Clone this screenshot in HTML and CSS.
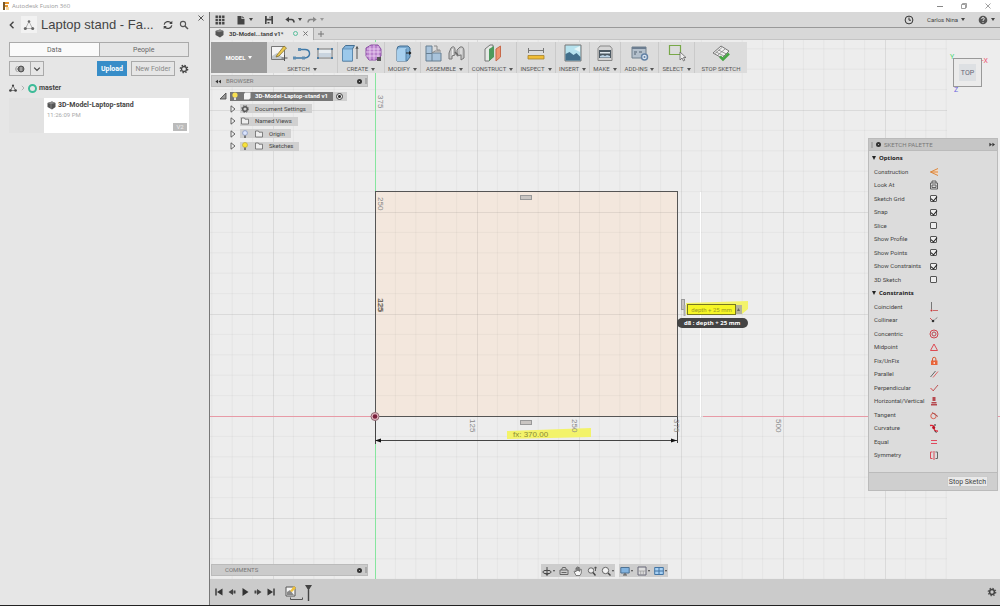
FILE: index.html
```html
<!DOCTYPE html>
<html lang="en">
<head>
<meta charset="utf-8">
<title>Autodesk Fusion 360</title>
<link rel="stylesheet" href="styles.css">
</head>
<body>
<header class="titlebar">
  <svg class="app-logo" viewBox="0 0 6 8"><path d="M0 0h6v2H2v1h3v2H2v3H0z" fill="#e8962e"/><path d="M0 0h2v8H0z" fill="#7a5a2a"/><path d="M3 5h3v3H3z" fill="#f6d8a0"/></svg>
  <span class="app-title">Autodesk Fusion 360</span>
  <div class="window-buttons">
    <button aria-label="Minimize"><svg viewBox="0 0 6 6"><path d="M0 3.5h6" stroke="#888" fill="none"/></svg></button>
    <button aria-label="Restore"><svg viewBox="0 0 6 6"><path d="M.5 1.5h4v4h-4zM1.5 1.5v-1h4v4h-1" stroke="#888" stroke-width=".8" fill="none"/></svg></button>
    <button aria-label="Close window"><svg viewBox="0 0 6 6"><path d="M.5.5l5 5m0-5l-5 5" stroke="#888" stroke-width=".8" fill="none"/></svg></button>
  </div>
</header>

<div class="workspace">
  <aside class="data-panel">
    <button class="panel-close" aria-label="Close panel"><svg viewBox="0 0 6 6"><path d="M.5.5l5 5m0-5l-5 5" stroke="#555" fill="none"/></svg></button>
    <div class="project-row">
      <button class="back" aria-label="Back"><svg viewBox="0 0 6 8"><path d="M4.500.8L1.300 4l3.200 3.200" stroke="#444" stroke-width="1.400" fill="none"/></svg></button>
      <span class="project-tile"><svg viewBox="0 0 12 12"><path d="M6 2.500L2.500 9.500h7z" stroke="#999" stroke-width=".7" fill="none"/><circle cx="6" cy="2.500" r="1.300" fill="#666"/><circle cx="2.300" cy="9.500" r="1.500" fill="#666"/><circle cx="9.700" cy="9.500" r="1.500" fill="#666"/></svg></span>
      <h1>Laptop stand - Fa...</h1>
      <button class="tool refresh" aria-label="Refresh"><svg viewBox="0 0 10 10"><path d="M1.200 4.600a3.900 3.500 0 0 1 7-1.600M8.800 5.400a3.900 3.500 0 0 1-7 1.600" stroke="#444" stroke-width="1.200" fill="none"/><path d="M9.300.8v3.200H6.200zM.7 9.200V6h3.100z" fill="#444"/></svg></button>
      <button class="tool" aria-label="Search"><svg viewBox="0 0 10 10"><circle cx="4" cy="4" r="2.600" stroke="#555" stroke-width="1.100" fill="none"/><path d="M6 6l3 3" stroke="#555" stroke-width="1.500"/></svg></button>
    </div>
    <div class="view-tabs">
      <button class="active">Data</button>
      <button>People</button>
    </div>
    <div class="actions">
      <div class="split">
        <button aria-label="Visibility"><svg viewBox="0 0 12 10"><path d="M3.500 2Q0 5 3.500 8M3 5h2" stroke="#888" stroke-width=".9" fill="none"/><circle cx="7" cy="5" r="3" fill="#777" stroke="#444" stroke-width=".8"/><path d="M6 3.800h2.200M6 5h2.200M6 6.200h2.200" stroke="#ddd" stroke-width=".6"/></svg></button>
        <button aria-label="More"><svg viewBox="0 0 8 8"><path d="M1.200 2.700L4 5.500l2.800-2.800" stroke="#444" stroke-width="1.200" fill="none"/></svg></button>
      </div>
      <button class="upload">Upload</button>
      <button class="new-folder">New Folder</button>
      <button class="tool gear" aria-label="Settings"><svg viewBox="0 0 10 10"><circle cx="5" cy="5" r="3.700" stroke="#444" stroke-width="1.300" stroke-dasharray="1.450 1.450" fill="none"/><circle cx="5" cy="5" r="2.500" stroke="#444" stroke-width="1.300" fill="none"/></svg></button>
    </div>
    <nav class="crumbs" aria-label="Folder">
      <svg class="i8" viewBox="0 0 8 8"><path d="M4 1.500L1.500 6.500h5z" stroke="#555" stroke-width=".7" fill="none"/><circle cx="4" cy="1.500" r="1.100" fill="#444"/><circle cx="1.400" cy="6.500" r="1.300" fill="#444"/><circle cx="6.600" cy="6.500" r="1.300" fill="#444"/></svg>
      <svg class="chev" viewBox="0 0 4 6"><path d="M.8.8L3 3 .8 5.200" stroke="#999" stroke-width=".7" fill="none"/></svg>
      <span class="ring"></span>
      <a href="#master">master</a>
    </nav>
    <article class="file-card">
      <div class="thumb"></div>
      <div class="file-info">
        <h2><svg class="i9" viewBox="0 0 9 9"><path d="M.5 2L5 .5 8.500 2v4L5 8.500.5 6z" fill="#555"/><path d="M.5 2L4 3.200 8.500 2 5 .5z" fill="#888"/><path d="M4 3.200V8" stroke="#aaa" stroke-width=".5"/></svg>3D-Model-Laptop-stand</h2>
        <time>11:26:09 PM</time>
        <span class="version">V2</span>
      </div>
    </article>
  </aside>

  <main class="editor">
    <div class="appbar">
      <button aria-label="Data panel"><svg viewBox="0 0 10 10"><path d="M.5.5h2.400v2.400H.5zM3.800.5h2.400v2.400H3.800zM7.100.5h2.400v2.400H7.100zM.5 3.800h2.400v2.400H.5zM3.800 3.800h2.400v2.400H3.800zM7.100 3.800h2.400v2.400H7.100zM.5 7.100h2.400v2.400H.5zM3.800 7.100h2.400v2.400H3.800zM7.100 7.100h2.400v2.400H7.100z" fill="#444"/></svg></button>
      <button class="drop" aria-label="File"><svg viewBox="0 0 10 10"><path d="M1.500 1h4v3h3v5.500h-7z" fill="#444"/><path d="M6.300 1l2.200 2.200H6.300z" fill="#444"/></svg></button>
      <button aria-label="Save"><svg viewBox="0 0 10 10"><path d="M1 1h8v8H1z" fill="#444"/><path d="M2.800 1h4.400v2.800H2.800zM2.600 5.500h4.800V9H2.600z" fill="#ddd"/><path d="M5.500 1.500h1v1.700h-1zM3.500 7h2v1.500h-2z" fill="#444"/></svg></button>
      <div class="history">
        <button class="drop" aria-label="Undo"><svg viewBox="0 0 10 10"><path d="M3 4.500h3.500Q9 4.700 9 7.500" stroke="#444" stroke-width="1.600" fill="none"/><path d="M.3 4.500L4 1.800v5.400z" fill="#444"/></svg></button>
        <button class="drop dim" aria-label="Redo"><svg viewBox="0 0 10 10"><path d="M7 4.500H3.500Q1 4.700 1 7.500" stroke="#888" stroke-width="1.400" fill="none"/><path d="M9.700 4.500L6 1.800v5.400z" fill="#888"/></svg></button>
      </div>
      <div class="account">
        <button aria-label="Job status"><svg viewBox="0 0 10 10"><circle cx="5" cy="5" r="3.900" stroke="#333" fill="none"/><path d="M5 2.500V5.200h2" stroke="#333" stroke-width="1" fill="none"/></svg></button>
        <button class="drop user">Carlos Nina</button>
        <button class="drop" aria-label="Help"><svg viewBox="0 0 10 10"><circle cx="5" cy="5" r="4.300" fill="#555"/><path d="M3.700 4q0-1.500 1.300-1.500T6.300 3.900Q6.300 4.800 5 5.200v.8M5 7v1" stroke="#eee" stroke-width=".9" fill="none"/></svg></button>
      </div>
    </div>
    <div class="doc-tabs">
      <div class="doc-tab">
        <svg class="i9" viewBox="0 0 9 9"><path d="M.5 2L5 .5 8.500 2v4L5 8.500.5 6z" fill="#555"/><path d="M.5 2L4 3.200 8.500 2 5 .5z" fill="#888"/></svg>
        <span>3D-Model...tand v1*</span>
        <i class="status"></i>
        <button aria-label="Close tab"><svg viewBox="0 0 6 6"><path d="M.5.5l5 5m0-5l-5 5" stroke="#777" stroke-width="1.200" fill="none"/></svg></button>
      </div>
      <button class="add-tab" aria-label="New tab"><svg viewBox="0 0 6 6"><path d="M3 0v6M0 3h6" stroke="#777" fill="none"/></svg></button>
    </div>

    <section class="canvas">
      <svg class="drawing" aria-label="Sketch">
        <defs>
          <pattern id="grid" x="375" y="416" width="102" height="102" patternUnits="userSpaceOnUse">
            <path d="M20.400 0v102M40.800 0v102M61.200 0v102M81.600 0v102M0 20.400h102M0 40.800h102M0 61.200h102M0 81.600h102" stroke="#000" stroke-opacity=".03"/>
            <path d="M.5 0v102M0 .5h102" stroke="#000" stroke-opacity=".08"/>
          </pattern>
        </defs>
        <g transform="translate(-210 -40)">
          <rect x="375" y="192" width="302" height="224" fill="#f3e7dd"/>
          <rect x="210" y="40" width="737" height="540" fill="url(#grid)"/>
          <path d="M375.500 40v540" stroke="#86e59e"/>
          <path d="M210 416.500h467M703 416.500h297" stroke="#e79aa6"/>
          <path d="M700.500 192v225" stroke="#fff"/>
          <rect x="375.500" y="191.500" width="302" height="225" fill="none" stroke="#555"/>
          <path d="M507 431l84-3v9l-84 2z" fill="#f3f36a"/>
          <path d="M375.500 417v27M677.500 417v26M376 440.500h301" stroke="#444"/>
          <path d="M375 440.500l6-2v4zM677 440.500l-6-2v4z" fill="#111"/>
          <g fill="#c9c5c2" stroke="#999"><rect x="520.500" y="195.500" width="11" height="4"/><rect x="520.500" y="420.500" width="11" height="4"/><rect x="681.500" y="299.500" width="3" height="10"/></g>
          <circle cx="375" cy="416.500" r="4" fill="#e5b9c2" stroke="#8d6972"/><circle cx="375" cy="416.500" r="2.300" fill="#79203b"/>
          <g class="scale-text">
            <text transform="translate(378 95) rotate(90)">375</text>
            <text transform="translate(378 197) rotate(90)">250</text>
            <text class="dark" transform="translate(378 299) rotate(90)">125</text>
            <text class="dark" transform="translate(378 298) rotate(90)">225</text>
            <text transform="translate(470 419) rotate(90)">125</text>
            <text transform="translate(572 419) rotate(90)">250</text>
            <text transform="translate(674 419) rotate(90)">375</text>
            <text transform="translate(776 419) rotate(90)">500</text>
          </g>
          <text class="dim-text" x="513" y="437">fx: 370.00</text>
          <path d="M686 303l62-2v8l-6 5h-56z" fill="#f3f36a"/>
          <path d="M684.500 305v11" stroke="#aaa" stroke-width="2"/>
          <rect x="735" y="305" width="7" height="9" fill="#b5b39b"/><path d="M737 311l1.500-3 1.500 3z" fill="#666"/>
        </g>
      </svg>
      <input class="dim-input" aria-label="Dimension" value="depth + 25 mm">
      <div class="dim-tip">d8 : depth + 25 mm</div>

      <div class="viewcube">
        <button>TOP</button>
        <span class="axis x">-X</span><span class="axis y">Y</span><span class="axis z">Z</span>
      </div>

      <div class="toolbar">
        <button class="mode drop">MODEL</button>
        <div class="group"><div class="icons">
          <svg viewBox="0 0 18 18"><path d="M1.500 2.500h13v13h-13z" fill="#f4f4f4" stroke="#777"/><path d="M2 12l5-3 8 6H2z" fill="#c2c8cc"/><path d="M7 11L14 2l2.500 2L9 12l-3 1z" fill="#ecc94f" stroke="#7a6524" stroke-width=".7"/><path d="M14.500 11v6M11.500 14h6" stroke="#555"/></svg>
          <svg viewBox="0 0 18 18"><path d="M1 14h11q5-1 4.500-5T11 5.500H7" stroke="#3d78a8" stroke-width="1.400" fill="none"/><path d="M0 12.500h3v3H0zM9 12.500h3v3H9zM5 4h3v3H5z" fill="#5f8db1"/></svg>
          <svg viewBox="0 0 18 18"><path d="M2 5h14v9H2z" fill="#e7ecf0" stroke="#777"/><path d="M3 9h12v4H3z" fill="#c9d4df"/><path d="M1 4h2v2H1zM15 4h2v2h-2zM1 13h2v2H1zM15 13h2v2h-2z" fill="#4f7da3"/></svg>
        </div><button class="drop">SKETCH</button></div>
        <div class="group"><div class="icons">
          <svg viewBox="0 0 18 18"><path d="M1.500 5l3-3.500h9L11.500 5v12h-10z" fill="#83b4dc" stroke="#456f92"/><path d="M1.500 5h10v12h-10z" fill="#9cc9eb" stroke="#5483a9" stroke-width=".7"/><path d="M16 3v12M15 5l1-2.500L17 5" stroke="#555" fill="none"/></svg>
          <svg viewBox="0 0 18 18"><path d="M2 4l5-3h7l3 4v7l-5 4H5l-3-4z" fill="#b983cc" stroke="#8c4fa5"/><path d="M2 8h15M2 12h14M6 2v14M10 1v15M14 2v12M3 5h13" stroke="#f0d8f6" stroke-width=".8"/><path d="M13 13h4v4h-4z" fill="#555"/></svg>
        </div><button class="drop">CREATE</button></div>
        <div class="group"><div class="icons">
          <svg viewBox="0 0 18 18"><path d="M3 5q0-3 3-3h8l2 2v9l-3 4H3z" fill="#78a9d0" stroke="#456f92"/><path d="M3 7q0-3 4-3h5v13H3z" fill="#a8d0ee"/><path d="M12 5v12" stroke="#5483a9"/><path d="M12 9h5" stroke="#222"/><path d="M15 7l2.500 2L15 11z" fill="#222"/></svg>
        </div><button class="drop">MODIFY</button></div>
        <div class="group"><div class="icons">
          <svg viewBox="0 0 18 18"><path d="M2 2h6v7h9v8H2z" fill="#a9c4dc" stroke="#667e91"/><path d="M2 9.500h6V17" stroke="#667e91" fill="none"/><path d="M10 2h3v4h3M8 9l3-2h6" stroke="#888" fill="none"/></svg>
          <svg viewBox="0 0 18 18"><path d="M2 15V9l2-5q3-3 4 1v6l-3 1v3zM10 12V6l3-3q4-1 4 4v7l-3 2v-5z" fill="#c4c4c4" stroke="#777"/><path d="M8 8l3 3" stroke="#666" stroke-width="1.500"/><path d="M5.500 5v6M14 4.500V10" stroke="#eee"/></svg>
        </div><button class="drop">ASSEMBLE</button></div>
        <div class="group"><div class="icons">
          <svg viewBox="0 0 18 18"><path d="M1 5l5-4h3v12l-4 4H1z" fill="#e6e9e6" stroke="#777"/><path d="M5 5l5-3v11l-5 4z" fill="#4d9a5d"/><path d="M12 5l4.500-3v11L12 17z" fill="#ee9370" stroke="#c7694a"/></svg>
        </div><button class="drop">CONSTRUCT</button></div>
        <div class="group"><div class="icons">
          <svg viewBox="0 0 18 18"><path d="M1.500 6.500h15M1.500 4v5M16.500 4v5" stroke="#777"/><path d="M1 11.500h16v3.500H1z" fill="#f1bd35" stroke="#a5802a" stroke-width=".8"/></svg>
        </div><button class="drop">INSPECT</button></div>
        <div class="group"><div class="icons">
          <svg viewBox="0 0 18 18"><path d="M1 1h16v16H1z" fill="#b6e2ee" stroke="#777"/><path d="M1.500 10l4-2 4 3 3-2 4 4v3.500h-15z" fill="#426f8b"/><path d="M10 5l6-3v6z" fill="#e5f5f8"/></svg>
        </div><button class="drop">INSERT</button></div>
        <div class="group"><div class="icons">
          <svg viewBox="0 0 18 18"><path d="M2 4.500L4 2h10l2 2.500v12H2z" fill="#d5d5d5" stroke="#888"/><path d="M3 6h12v8H3z" fill="#4c5963"/><path d="M4 8h10v1.500H4z" fill="#dfe8ee"/><path d="M4 12l3-1 2 1 2-1 3 1v1.500H4z" fill="#bdd5e8"/></svg>
        </div><button class="drop">MAKE</button></div>
        <div class="group"><div class="icons">
          <svg viewBox="0 0 18 18"><path d="M1 3h14v11H1z" fill="#b4c0cc" stroke="#71808e"/><path d="M1 3h14v2H1z" fill="#6c7d90"/><path d="M3 8h3M8 8h3M3 10h2" stroke="#506070"/><circle cx="13.500" cy="13" r="3" fill="#dce6f2" stroke="#6483a6" stroke-width="1.500"/><circle cx="13.500" cy="13" r="1" fill="#6483a6"/></svg>
        </div><button class="drop">ADD-INS</button></div>
        <div class="group"><div class="icons">
          <svg viewBox="0 0 18 18"><path d="M1.500 1.500h11v9h-11z" fill="none" stroke="#78a848" stroke-width="1.200"/><path d="M12 8v8l2-2 1.500 3 1.300-.8L15.500 13.500H18z" fill="#eee" stroke="#666" stroke-width=".8"/></svg>
        </div><button class="drop">SELECT</button></div>
        <div class="group"><div class="icons">
          <svg viewBox="0 0 18 18"><path d="M1 9l8-7 8 5-7 7z" fill="#f0f0f0" stroke="#777"/><path d="M4 8l8 4M6.500 6l8 4M6 11l7-6M3 9.500l7-6" stroke="#888" stroke-width=".8"/><path d="M8 12.500l3 3 6-6" stroke="#46a644" stroke-width="2.500" fill="none"/></svg>
        </div><button>STOP SKETCH</button></div>
      </div>

      <section class="browser">
        <header class="bar"><svg class="i6" viewBox="0 0 8 6"><path d="M4 .5v5L.5 3zM8 .5v5L4.500 3z" fill="#333"/></svg><span>BROWSER</span><i class="dot"></i><i class="grip"></i></header>
        <ul class="tree">
          <li><svg class="i8" viewBox="0 0 8 8"><path d="M7 1v6H1z" fill="#999" stroke="#444" stroke-width=".8"/></svg><div class="node root"><svg class="i8" viewBox="0 0 8 8"><circle cx="4" cy="3" r="2.600" fill="#f8e052"/><path d="M3 5.500h2V8H3z" fill="#ddd"/></svg><svg class="i8" viewBox="0 0 8 8"><path d="M1 2l1-1.500h5.500V6L6 7.500H1z" fill="#f5f5f5"/></svg><span>3D-Model-Laptop-stand v1</span></div><span class="activate"><i class="radio"></i></span></li>
          <li><svg class="i8 tri" viewBox="0 0 8 8"><path d="M2 .8L6 4 2 7.200z" fill="#eee" stroke="#444" stroke-width=".8"/></svg><div class="node"><svg class="i8" viewBox="0 0 8 8"><circle cx="4" cy="4" r="2.300" fill="none" stroke="#555" stroke-width="1.500"/><circle cx="4" cy="4" r="3.500" fill="none" stroke="#555" stroke-width=".8" stroke-dasharray="1.400"/></svg><span>Document Settings</span></div></li>
          <li><svg class="i8 tri" viewBox="0 0 8 8"><path d="M2 .8L6 4 2 7.200z" fill="#eee" stroke="#444" stroke-width=".8"/></svg><div class="node"><svg class="i8" viewBox="0 0 8 8"><path d="M.5 7V1h3l.5 1.200h3.500V7z" fill="#eee" stroke="#666" stroke-width=".8"/></svg><span>Named Views</span></div></li>
          <li><svg class="i8 tri" viewBox="0 0 8 8"><path d="M2 .8L6 4 2 7.200z" fill="#eee" stroke="#444" stroke-width=".8"/></svg><div class="node"><svg class="i8" viewBox="0 0 8 8"><circle cx="4" cy="3" r="2.400" fill="#dbe4fb" stroke="#7d8fc0" stroke-width=".7"/><path d="M3 5.500h2V8H3z" fill="#777"/></svg><svg class="i8" viewBox="0 0 8 8"><path d="M.5 7V1h3l.5 1.200h3.500V7z" fill="#eee" stroke="#666" stroke-width=".8"/></svg><span>Origin</span></div></li>
          <li><svg class="i8 tri" viewBox="0 0 8 8"><path d="M2 .8L6 4 2 7.200z" fill="#eee" stroke="#444" stroke-width=".8"/></svg><div class="node"><svg class="i8" viewBox="0 0 8 8"><circle cx="4" cy="3" r="2.500" fill="#f8e23a" stroke="#b8a52c" stroke-width=".6"/><path d="M3 5.500h2V8H3z" fill="#777"/></svg><svg class="i8" viewBox="0 0 8 8"><path d="M.5 7V1h3l.5 1.200h3.500V7z" fill="#eee" stroke="#666" stroke-width=".8"/></svg><span>Sketches</span></div></li>
        </ul>
      </section>

      <section class="palette">
        <header class="bar"><i class="grip"></i><i class="dot"></i><span>SKETCH PALETTE</span><svg class="i6" viewBox="0 0 8 6"><path d="M.5.5v5L4 3zM4.500.5v5L8 3z" fill="#333"/></svg></header>
        <h3>Options</h3>
        <div class="rows">
          <label>Construction<button aria-label="Construction"><svg viewBox="0 0 10 10"><path d="M9 1.500L1.500 5 9 8.500" fill="#f7d9be" stroke="#d9863d"/><path d="M1.500 5H9" stroke="#d9863d"/></svg></button></label>
          <label>Look At<button aria-label="Look At"><svg viewBox="0 0 10 10"><path d="M1.500 3h7v6h-7zM3 3V1h4v2M3 5h4v2.500H3z" fill="none" stroke="#555" stroke-width=".9"/></svg></button></label>
          <label>Sketch Grid<input type="checkbox" checked></label>
          <label>Snap<input type="checkbox" checked></label>
          <label>Slice<input type="checkbox"></label>
          <label>Show Profile<input type="checkbox" checked></label>
          <label>Show Points<input type="checkbox" checked></label>
          <label>Show Constraints<input type="checkbox" checked></label>
          <label>3D Sketch<input type="checkbox"></label>
        </div>
        <h3>Constraints</h3>
        <div class="rows">
          <label>Coincident<button aria-label="Coincident"><svg viewBox="0 0 10 10"><path d="M2.500 0v7.500" stroke="#777"/><path d="M4 8.500h5" stroke="#c66"/><circle cx="2.500" cy="8.500" r="1" fill="#c33"/></svg></button></label>
          <label>Collinear<button aria-label="Collinear"><svg viewBox="0 0 10 10"><path d="M4 6l5-4" stroke="#777" stroke-dasharray="2 1"/><path d="M1 3l3 3" stroke="#c55"/><circle cx="4" cy="6" r="1.300" fill="#333"/></svg></button></label>
          <label>Concentric<button aria-label="Concentric"><svg viewBox="0 0 10 10"><circle cx="5" cy="5" r="4" fill="none" stroke="#d0454f"/><circle cx="5" cy="5" r="2" fill="none" stroke="#b34d55"/></svg></button></label>
          <label>Midpoint<button aria-label="Midpoint"><svg viewBox="0 0 10 10"><path d="M5 2l3.500 6.500h-7z" fill="none" stroke="#dd4a52"/></svg></button></label>
          <label>Fix/UnFix<button aria-label="Fix/UnFix"><svg viewBox="0 0 10 10"><path d="M2 4.500h6.500V9H2z" fill="#e8653a"/><path d="M3.500 5V3a1.700 1.700 0 0 1 3.400 0v2" fill="none" stroke="#d95b36"/><path d="M5.200 6v2" stroke="#fff"/></svg></button></label>
          <label>Parallel<button aria-label="Parallel"><svg viewBox="0 0 10 10"><path d="M1.500 8l5-6" stroke="#666"/><path d="M4 8.500l5-6" stroke="#d66"/></svg></button></label>
          <label>Perpendicular<button aria-label="Perpendicular"><svg viewBox="0 0 10 10"><path d="M1.500 5l3 3" stroke="#d44"/><path d="M4 8l5-6" stroke="#b55"/></svg></button></label>
          <label>Horizontal/Vertical<button aria-label="Horizontal/Vertical"><svg viewBox="0 0 10 10"><path d="M3.500 1h3v4h-3zM2.500 6h5v1.500h-5zM2 8h6v1.500H2z" fill="#b5484e"/></svg></button></label>
          <label>Tangent<button aria-label="Tangent"><svg viewBox="0 0 10 10"><circle cx="4.500" cy="6" r="2.700" fill="none" stroke="#d9604f"/><path d="M3 2.500l6 4" stroke="#a55"/></svg></button></label>
          <label>Curvature<button aria-label="Curvature"><svg viewBox="0 0 10 10"><path d="M1 2.500q4-1 4 2.500t4 3" fill="none" stroke="#d23" stroke-width="1.300"/><circle cx="4.700" cy="4.500" r="1.500" fill="#b12"/><path d="M6 1v2M5.500 8l2 1.500" stroke="#333"/></svg></button></label>
          <label>Equal<button aria-label="Equal"><svg viewBox="0 0 10 10"><path d="M2 3.500h6M2 6.500h6" stroke="#e0485c" stroke-width="1.200"/></svg></button></label>
          <label>Symmetry<button aria-label="Symmetry"><svg viewBox="0 0 10 10"><path d="M3.500 2h-2v6.500h2M5 1v9" fill="none" stroke="#d84b58"/><path d="M6.500 2h2v6.500h-2" fill="none" stroke="#666"/></svg></button></label>
        </div>
        <footer><button>Stop Sketch</button></footer>
      </section>

      <section class="bar comments"><span>COMMENTS</span><i class="dot"></i><i class="grip"></i></section>

      <div class="navbar">
        <div>
          <button class="drop" aria-label="Orbit"><svg viewBox="0 0 10 10"><path d="M5 1v8M3.500 7.500L5 9.500l1.500-2" stroke="#444" fill="none"/><ellipse cx="5" cy="6" rx="4.200" ry="1.700" fill="none" stroke="#444"/></svg></button>
          <button aria-label="Look at"><svg viewBox="0 0 10 10"><path d="M1 4h8v4.500H1zM2.500 4l1-2.500h3l1 2.500M2.500 6.500h5" stroke="#666" fill="none"/></svg></button>
          <button aria-label="Pan"><svg viewBox="0 0 10 10"><path d="M3 9.500L1 5.500l1-.5 1 1V2h1v3-4h1.200v4-3.500h1.200V5.500L7.500 3l.8.3V7L7 9.500z" fill="#f5f5f5" stroke="#555" stroke-width=".7"/></svg></button>
          <button aria-label="Zoom"><svg viewBox="0 0 10 10"><circle cx="4" cy="4.500" r="2.700" fill="#eee" stroke="#666"/><path d="M6 6.500l2.500 3" stroke="#444" stroke-width="1.400"/><path d="M8.500 1v4M7 2.500L8.500.8 10 2.500" stroke="#444" stroke-width=".8" fill="none"/></svg></button>
          <button class="drop" aria-label="Fit"><svg viewBox="0 0 10 10"><circle cx="4.500" cy="4.500" r="3.200" fill="#f3f3f3" stroke="#666"/><path d="M7 7l2.500 2.500" stroke="#444" stroke-width="1.400"/></svg></button>
        </div>
        <div>
          <button class="drop" aria-label="Display"><svg viewBox="0 0 10 10"><path d="M.8 1.500h8.400V7H.8z" fill="#82b3df" stroke="#4f7394"/><path d="M3 9h4M5 7v2" stroke="#555"/></svg></button>
          <button class="drop" aria-label="Grid"><svg viewBox="0 0 10 10"><path d="M1 1h8v8H1z" fill="#ddd" stroke="#667"/><path d="M1 5h8M3.700 5v4M6.300 5v4" stroke="#999" stroke-width=".7"/></svg></button>
          <button class="drop" aria-label="Viewports"><svg viewBox="0 0 10 10"><path d="M.7 1.500h8.600v7H.7z" fill="#a8d1f4" stroke="#4375a4"/><path d="M5 1v8M.5 5h9" stroke="#4375a4"/></svg></button>
        </div>
      </div>
    </section>

    <div class="timeline">
      <button aria-label="To start"><svg viewBox="0 0 10 10"><path d="M2 1.500v7" stroke="#333" stroke-width="1.400"/><path d="M8.500 1.500v7L3 5z" fill="#333"/></svg></button>
      <button aria-label="Step back"><svg viewBox="0 0 10 10"><path d="M6 2v6L1.500 5zM6.500 3.500h2v3h-2z" fill="#444"/></svg></button>
      <button aria-label="Play"><svg viewBox="0 0 10 10"><path d="M2.500 1v8L8.500 5z" fill="#333"/></svg></button>
      <button aria-label="Step forward"><svg viewBox="0 0 10 10"><path d="M4 2v6l4.500-3zM1.500 3.500h2v3h-2z" fill="#444"/></svg></button>
      <button aria-label="To end"><svg viewBox="0 0 10 10"><path d="M8 1.500v7" stroke="#333" stroke-width="1.400"/><path d="M1.500 1.500v7L7 5z" fill="#333"/></svg></button>
      <svg class="marker" viewBox="0 0 32 20"><path d="M2 5h9v9H2z" fill="#f5f5f5" stroke="#555"/><path d="M3 10l3-2 4 5H3z" fill="#888"/><path d="M6 9l4-5 2 2-4 4z" fill="#efc13c"/><path d="M6.500 15.500v2h12v-2" stroke="#555" fill="none"/><path d="M21 3h7l-2.500 4h-2z" fill="#444"/><path d="M24.500 6v13" stroke="#444" stroke-width="1.400"/></svg>
      <button class="tl-settings" aria-label="Timeline settings"><svg viewBox="0 0 10 10"><circle cx="5" cy="5" r="3.700" stroke="#555" stroke-width="1.300" stroke-dasharray="1.450 1.450" fill="none"/><circle cx="5" cy="5" r="2.400" stroke="#444" stroke-width="1.500" fill="none"/></svg></button>
    </div>
  </main>
</div>
</body>
</html>
```

FILE: styles.css
```css
* { box-sizing: border-box; }
body {
  margin: 0;
  height: 100vh;
  display: flex;
  flex-direction: column;
  overflow: hidden;
  background: #fff;
  color: #444;
  font: 6px/8px Roboto, "Liberation Sans", sans-serif;
}
button, input { font: inherit; color: inherit; margin: 0; padding: 0; border: 0; background: none; }
button { display: flex; align-items: center; justify-content: center; white-space: nowrap; }
svg { display: block; flex: none; }
ul { list-style: none; margin: 0; padding: 0; }
h1, h2, h3 { margin: 0; font-size: 6px; font-weight: normal; }
a { color: inherit; text-decoration: none; }
button > svg { width: 10px; height: 10px; }
.i6 { width: 6px; height: 5px; }
.i8 { width: 8px; height: 8px; }
.i9 { width: 9px; height: 9px; }
.drop::after {
  content: "";
  margin-left: 3px;
  border: 2px solid transparent;
  border-top: 3px solid currentColor;
  border-bottom: 0;
}

.titlebar { display: flex; align-items: center; height: 12px; flex: none; padding: 0 9px 0 3px; gap: 3px; color: #999; }
.app-title { font-family: "Open Sans", sans-serif; }
.app-logo { width: 6px; height: 8px; }
.window-buttons { display: flex; gap: 18px; margin-left: auto; }
.window-buttons svg { width: 6px; height: 6px; }

.workspace { display: flex; flex: 1; min-height: 0; border-bottom: 1px solid #222; }

.data-panel { position: relative; width: 210px; flex: none; padding: 4px 20px 0 9px; background: #e6e6e6; border-right: 1px solid #777; }
.panel-close { position: absolute; top: 3px; right: 5px; }
.panel-close svg { width: 6px; height: 6px; }
.project-row { display: flex; align-items: center; height: 17px; }
.back svg { width: 6px; height: 8px; }
.project-tile { display: grid; place-items: center; width: 16px; height: 17px; margin: 0 4px 0 6px; background: #f2f2f2; }
.project-tile svg { width: 12px; height: 12px; }
.project-row h1 { flex: 1; min-width: 0; font: 13px/17px "Liberation Sans", sans-serif; color: #444; white-space: nowrap; }
.project-row .refresh { margin-right: 6px; }
.view-tabs { display: flex; margin-top: 9px; border: 1px solid #aaa; }
.view-tabs button { flex: 1; height: 13px; font-size: 7px; color: #666; }
.view-tabs .active { background: #fafafa; border-right: 1px solid #aaa; }
.actions { display: flex; align-items: center; height: 15px; margin-top: 4px; gap: 4px; }
.split { display: flex; height: 15px; border: 1px solid #aaa; margin-right: auto; }
.split button { width: 20px; }
.split button + button { width: 13px; border-left: 1px solid #aaa; }
.split svg { width: 12px; }
.split button + button svg { width: 8px; height: 8px; }
.upload { width: 30px; height: 15px; background: #378dc8; color: #fff; font-size: 7px; font-weight: bold; }
.new-folder { width: 44px; height: 15px; border: 1px solid #aaa; color: #888; font-size: 7px; }
.crumbs { display: flex; align-items: center; height: 10px; margin-top: 7px; }
.chev { width: 4px; height: 6px; margin: 0 3px 0 4px; }
.ring { width: 9px; height: 9px; border: 2px solid #3dbb98; border-radius: 50%; margin-right: 2px; }
.crumbs a { font-size: 7px; font-weight: bold; }
.file-card { display: flex; height: 35px; margin-top: 5px; }
.thumb { width: 35px; background: #e2e2e2; }
.file-info { flex: 1; position: relative; padding: 2px 3px; background: #fff; }
.file-info h2 { display: flex; gap: 2px; align-items: center; font-size: 7px; font-weight: bold; line-height: 10px; color: #444; }
.file-info time { display: block; margin-top: 1px; color: #aaa; }
.version { position: absolute; right: 2px; bottom: 2px; width: 14px; height: 8px; background: #bbb; color: #eee; text-align: center; }

.editor { display: flex; flex-direction: column; flex: 1; min-width: 0; }
.appbar { display: flex; align-items: center; height: 16px; flex: none; padding: 0 5px; gap: 11px; background: #d8d8d8; border-bottom: 1px solid #999; }
.dim { color: #999; }
.history { display: flex; gap: 5px; }
.account { display: flex; gap: 13px; margin-left: auto; }
.doc-tabs { display: flex; align-items: center; height: 12px; flex: none; background: #d8d8d8; border-bottom: 1px solid #c4c4c4; }
.doc-tab { display: flex; align-items: center; gap: 5px; width: 104px; height: 12px; padding: 0 5px; background: #e8e8e8; border-right: 1px solid #aaa; font-weight: bold; white-space: nowrap; }
.doc-tab button svg { width: 5px; height: 5px; }
.status { width: 5px; height: 5px; margin-left: auto; border: 1px solid #58be9c; border-radius: 50%; }
.add-tab { padding: 0 4px; }
.add-tab svg { width: 6px; height: 6px; }

.canvas { position: relative; flex: 1; min-height: 0; background: #ededed; overflow: hidden; }
.drawing { position: absolute; width: 100%; height: 100%; }
.scale-text { font: 8px "Liberation Sans", sans-serif; fill: #888; }
.scale-text .dark { fill: #665c55; }
.dim-text { font: 8px "Liberation Sans", sans-serif; fill: #8a8a35; }
.dim-input { position: absolute; left: 477px; top: 264px; width: 49px; height: 11px; background: #f6f626; border: 1px solid #777722; color: #9a9a25; text-align: center; }
.dim-tip { position: absolute; left: 467px; top: 278px; padding: 1px 7px; border-radius: 5px; background: #444; color: #fff; font-family: "Open Sans", sans-serif; font-weight: bold; white-space: nowrap; }

.viewcube { position: absolute; right: 18px; top: 18px; width: 29px; height: 29px; padding: 5px; border: 1px solid #999; background: #ebebeb; }
.viewcube button { width: 100%; height: 100%; background: #dde0e3; color: #667; font-size: 7px; }
.axis { position: absolute; font-size: 7px; }
.axis.x { right: -7px; top: -2px; color: #ee5570; }
.axis.y { left: -4px; top: -6px; color: #4fd877; }
.axis.z { left: 0; bottom: -8px; color: #6a62dd; }

.toolbar {
  position: absolute; left: 1px; top: 2px;
  display: grid;
  grid-template-columns: 56px 71px 47px 36px 48px 48px 39px 34px 31px 38px 36px 52px;
  height: 31px;
  background: #dcdcdc;
  color: #555;
}
.mode { background: #9c9c9c; color: #fff; font-weight: bold; }
.group { display: flex; flex-direction: column; align-items: center; justify-content: space-between; padding-top: 2px; border-right: 1px solid #cacaca; }
.group:last-child { border: 0; }
.icons { display: flex; gap: 5px; }
.icons svg { width: 18px; height: 18px; }

.bar { display: flex; align-items: center; height: 12px; gap: 3px; padding: 0 2px; background: #cbcbcb; border: 1px solid #bbb; color: #777; }
.bar span { flex: 1; }
.dot { width: 5px; height: 5px; border: 2px solid #333; border-radius: 50%; background: #ddd; }
.grip { width: 2px; height: 6px; border: 1px solid #aaa; border-width: 0 1px; }
.browser { position: absolute; left: 1px; top: 35px; width: 157px; }
.browser .bar { padding: 0 0 0 3px; }
.browser .bar span { padding-left: 2px; }
.tree { padding: 3px 0 0 8px; }
.tree li { display: flex; align-items: center; height: 12px; gap: 3px; }
.tree li:nth-child(even) { height: 13px; }
.tree .tri { margin-left: 10px; }
.node { display: flex; align-items: center; height: 9px; gap: 6px; padding: 0 6px 0 1px; background: #d0d0d0; }
.root { gap: 4px; padding: 0 5px 0 1px; background: #777; color: #fff; font-weight: bold; }
.activate { display: grid; place-items: center; width: 14px; height: 9px; margin-left: -3px; background: #d0d0d0; }
.radio { width: 7px; height: 7px; border: 1px solid #444; border-radius: 50%; background: radial-gradient(#333 1px, #eee 2px); }

.palette { position: absolute; right: 2px; top: 98px; width: 130px; background: #dcdcdc; border: 1px solid #bbb; }
.palette .bar { border-width: 0 0 1px; background: #c6c6c6; }
.palette h3 { display: flex; align-items: center; height: 14px; padding-left: 3px; gap: 3px; font-family: "Open Sans", sans-serif; font-weight: bold; color: #222; }
.palette h3::before { content: ""; border: 2px solid transparent; border-top: 4px solid #222; border-bottom: 0; }
.rows { display: grid; }
.rows label { display: grid; grid-template-columns: 55px 10px; align-items: center; height: 13px; padding-left: 5px; white-space: nowrap; }
.rows label:nth-child(even) { height: 14px; }
.rows input { appearance: none; width: 7px; height: 7px; margin-left: 1px; border: 1px solid #555; border-radius: 1px; background: #eee; }
.rows input:checked::after { content: ""; display: block; width: 3px; height: 5px; margin: -1px 0 0 1px; border: solid #222; border-width: 0 1px 1px 0; transform: rotate(40deg); }
.palette footer { display: flex; justify-content: flex-end; padding: 3px 9px; margin-top: 10px; border-top: 1px solid #bbb; background: #cfcfcf; }
.palette footer button { height: 11px; padding: 0 1px; background: #e9e9e9; border: 1px solid #ccc; font-size: 7px; }

.comments { position: absolute; left: 1px; bottom: 3px; width: 157px; padding: 0; }
.comments span { padding-left: 13px; }
.navbar { position: absolute; left: 331px; bottom: 2px; display: flex; gap: 4px; }
.navbar div { display: flex; align-items: center; height: 13px; gap: 4px; padding: 0 1px; background: #cdcdcd; }
.navbar .drop::after { margin-left: 1px; border-width: 2px 1px 0; }

.timeline { display: flex; align-items: center; height: 26px; flex: none; padding: 0 3px 0 4px; gap: 3px; background: #cbcbcb; }
.marker { width: 32px; height: 20px; margin-left: 5px; }
.tl-settings { margin-left: auto; }
```
